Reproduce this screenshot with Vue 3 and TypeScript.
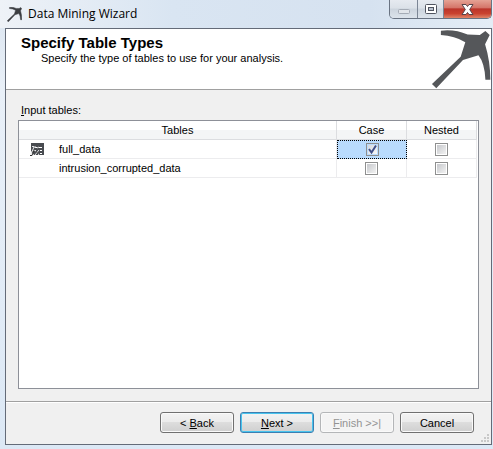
<script setup lang="ts">
import { ref } from 'vue'

interface TableRow {
  name: string
  hasIcon: boolean
  isCase: boolean
  isNested: boolean
}

const rows = ref<TableRow[]>([
  { name: 'full_data', hasIcon: true, isCase: true, isNested: false },
  { name: 'intrusion_corrupted_data', hasIcon: false, isCase: false, isNested: false },
])
const selected = ref(0)
</script>

<template>
  <div class="window">
    <header class="titlebar">
      <svg class="app-icon" viewBox="180 86 182 182" aria-hidden="true">
        <path d="M210 91 Q253 86 291 103 L328 104 L345 92 L358 104 L344 132 Q360 184 360 240 L345 240 Q343 190 324 166 L277 180 L196 266 L183 253 L270 170 L284 126 Q252 106 210 104 Z" />
      </svg>
      <span class="title">Data Mining Wizard</span>
      <div class="controls">
        <button class="control" type="button" aria-label="Minimize">
          <svg width="12" height="5" viewBox="0 0 12 5"><rect x=".5" y=".5" width="11" height="4" rx="1" fill="#e1e5ea" stroke="#a4abb5" /></svg>
        </button>
        <button class="control middle" type="button" aria-label="Maximize">
          <svg width="12" height="10" viewBox="0 0 12 10"><rect x=".5" y=".5" width="11" height="9" rx="1" fill="#fff" stroke="#50545f" /><rect x="3.5" y="3.5" width="5" height="3" fill="#bac2ce" stroke="#50545f" /></svg>
        </button>
        <button class="control close" type="button" aria-label="Close">
          <svg width="13" height="11" viewBox="0 0 13 11"><path d="M1 .5H5L6.5 2.5 8 .5H12L8.7 5.5 12 10.5H8L6.5 8.5 5 10.5H1L4.3 5.5Z" fill="#fff" stroke="#574349" /></svg>
        </button>
      </div>
    </header>

    <main class="client">
      <section class="banner">
        <div class="banner-text">
          <h1>Specify Table Types</h1>
          <p>Specify the type of tables to use for your analysis.</p>
        </div>
        <svg class="pickaxe" viewBox="180 86 182 182" aria-hidden="true">
          <path d="M210 91 Q253 86 291 103 L328 104 L345 92 L358 104 L344 132 Q360 184 360 240 L345 240 Q343 190 324 166 L277 180 L196 266 L183 253 L270 170 L284 126 Q252 106 210 104 Z" />
        </svg>
      </section>

      <section class="content">
        <div id="tables-label" class="label"><u>I</u>nput tables:</div>
        <div class="grid">
          <table aria-labelledby="tables-label">
            <thead>
              <tr>
                <th scope="col">Tables</th>
                <th scope="col" class="check">Case</th>
                <th scope="col" class="check">Nested</th>
              </tr>
            </thead>
            <tbody>
              <tr v-for="(row, i) in rows" :key="row.name">
                <td>
                  <div class="name">
                    <span class="row-icon">
                      <svg v-if="row.hasIcon" width="14" height="13" viewBox="0 0 14 13" aria-hidden="true">
                        <path d="M1 0H14V12H4L1 8Z" fill="#484b50" />
                        <path d="M9 4.5H12M10 7.5H12M10 10.5H12M5 4.5H7" stroke="#fff" />
                        <path d="M1 11L4 4H6M2 7.5H6M5 7L9 12M9 7L5 12M7 5L9 4M2 3.5H4" fill="none" stroke="#e4e5e7" />
                        <path d="M0 12.5H2L4 7M6 8L8 11" fill="none" stroke="#333" />
                      </svg>
                    </span>
                    <span>{{ row.name }}</span>
                  </div>
                </td>
                <td class="check" :class="{ selected: selected === i }">
                  <input v-model="row.isCase" type="checkbox" :aria-label="row.name + ' case'" @focus="selected = i" />
                </td>
                <td class="check">
                  <input v-model="row.isNested" type="checkbox" :aria-label="row.name + ' nested'" />
                </td>
              </tr>
            </tbody>
          </table>
        </div>
      </section>

      <footer class="actions">
        <button class="action" type="button">&lt; <u>B</u>ack</button>
        <button class="action primary" type="button"><u>N</u>ext &gt;</button>
        <button class="action" type="button" disabled><u>F</u>inish &gt;&gt;|</button>
        <button class="action" type="button">Cancel</button>
        <svg class="grip" width="8" height="8" viewBox="0 0 8 8" aria-hidden="true">
          <path d="M6 0h2v2H6zM3 3h2v2H3zM6 3h2v2H6zM0 6h2v2H0zM3 6h2v2H3zM6 6h2v2H6z" fill="#c8c8c8" />
        </svg>
      </footer>
    </main>
  </div>
</template>

<style>
body {
  margin: 0;
}
</style>

<style scoped>
* {
  box-sizing: border-box;
}

.window {
  display: flex;
  flex-direction: column;
  min-height: 100vh;
  padding: 0 1px 4px 5px;
  background: linear-gradient(180deg, #d9e4f1 0, #dfe8f2 28px, #e9f0f8 90px, #dce8f5 100%);
  color: #000;
  font: 11px/14px "Liberation Sans", Arial, sans-serif;
}

.titlebar {
  display: flex;
  align-items: center;
  height: 28px;
  margin: 0 -1px 0 -5px;
  padding: 0 1px 0 7px;
  background: linear-gradient(90deg, #eef2f7, #d9e5f2 35%, #d6e2f0 75%, #e4edf6);
}

.app-icon {
  width: 15px;
  height: 15px;
  fill: #3c3e42;
  stroke: #3c3e42;
  stroke-width: 6px;
}

.title {
  flex: 1;
  margin-left: 6px;
  font: 12px/16px "Open Sans", "Noto Sans", sans-serif;
}

.controls {
  display: flex;
  align-self: flex-start;
  height: 19px;
  border: 1px solid #697382;
  border-top: 0;
  border-radius: 0 0 5px 5px;
  overflow: hidden;
}

.control {
  display: flex;
  align-items: center;
  justify-content: center;
  width: 27px;
  padding: 0;
  border: 0;
  background: linear-gradient(#e6eaf0 0, #dbe1e8 45%, #ccd4dd 50%, #dce3eb 100%);
}

.control:first-child {
  padding-top: 5px;
}

.control.middle {
  border: solid #7c8695;
  border-width: 0 1px;
}

.control.close {
  width: 47px;
  background: linear-gradient(#e5a294 0, #d5766a 42%, #bb352a 50%, #c9422f 75%, #df8467 100%);
}

.client {
  display: flex;
  flex: 1;
  flex-direction: column;
  border: 1px solid #646b78;
  background: #f0f0f0;
}

.banner {
  display: flex;
  justify-content: space-between;
  height: 61px;
  border-bottom: 1px solid #a0a0a0;
  background: #fff;
}

.banner-text {
  padding: 6px 0 0 15px;
}

h1 {
  margin: 0;
  font-size: 15px;
  line-height: 16px;
}

.banner p {
  margin: 0 0 0 20px;
}

.pickaxe {
  width: 60px;
  height: 60px;
  fill: #55575a;
}

.content {
  display: flex;
  flex: 1;
  flex-direction: column;
  padding: 13px 12px 12px;
}

.label {
  padding: 0 3px;
  margin-bottom: 3px;
}

.grid {
  flex: 1;
  padding-right: 1px;
  border: 1px solid #8d9098;
  background: #fff;
}

table {
  width: 100%;
  border-collapse: separate;
  border-spacing: 0;
  table-layout: fixed;
}

th {
  height: 19px;
  padding: 0;
  border: solid #dcdde0;
  border-width: 0 1px 1px 0;
  background: linear-gradient(#fff 50%, #f4f5f6 50%);
  font-weight: normal;
}

td {
  height: 19px;
  padding: 0;
  border: solid #ececee;
  border-width: 0 1px 1px 0;
}

.check {
  width: 70px;
  text-align: center;
}

.selected {
  border: 1px dotted #000;
  background: #b9dbfd;
}

.name {
  display: flex;
  align-items: center;
}

.row-icon {
  display: flex;
  width: 40px;
  padding-left: 11px;
}

input {
  display: block;
  width: 13px;
  height: 13px;
  margin: 0 auto;
  padding: 1px;
  border: 1px solid #8e8f8f;
  outline: 0;
  appearance: none;
  background: linear-gradient(135deg, #c6c8cc, #f2f2f2) content-box #f4f4f4;
}

input:checked {
  background: url("data:image/svg+xml,%3Csvg xmlns='http://www.w3.org/2000/svg' viewBox='0 0 11 11'%3E%3Cpath d='M2 5L4.5 8.5 9 1.5' fill='none' stroke='%2340508a' stroke-width='2'/%3E%3C/svg%3E") padding-box, linear-gradient(135deg, #d4d8df, #f8f8f8) content-box #f4f4f4;
}

.actions {
  position: relative;
  display: flex;
  justify-content: flex-end;
  gap: 6px;
  padding: 10px 17px 11px;
  border-top: 1px solid #a0a0a0;
  box-shadow: inset 0 1px #fff;
}

.action {
  width: 74px;
  height: 21px;
  padding: 0;
  border: 1px solid #707070;
  border-radius: 3px;
  background: linear-gradient(#f3f3f3 0, #ebebeb 48%, #dddddd 50%, #cfcfcf 100%);
  box-shadow: inset 0 0 0 1px #fafafa;
  color: #000;
  font: inherit;
}

.action.primary {
  border-color: #3c7fb1;
  box-shadow: inset 0 0 0 1px #48c4ee;
}

.action:disabled {
  border-color: #b4b6b8;
  background: #f4f4f4;
  color: #939393;
}

.grip {
  position: absolute;
  right: 2px;
  bottom: 2px;
}
</style>
